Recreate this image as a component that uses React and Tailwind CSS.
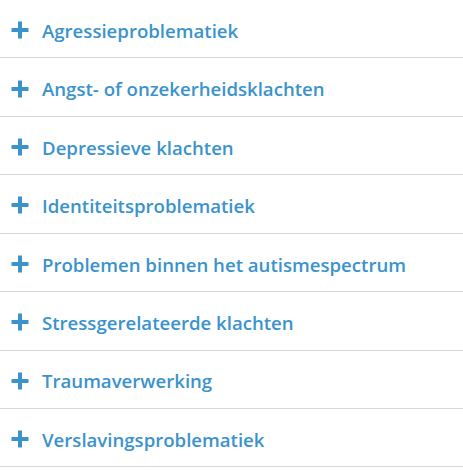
import React from "react";

const items = [
  "Agressieproblematiek",
  "Angst- of onzekerheidsklachten",
  "Depressieve klachten",
  "Identiteitsproblematiek",
  "Problemen binnen het autismespectrum",
  "Stressgerelateerde klachten",
  "Traumaverwerking",
  "Verslavingsproblematiek",
];

function Plus() {
  return (
    <svg width="18" height="18" viewBox="0 0 18 18" className="shrink-0">
      <rect x="7" y="0.5" width="4" height="17" fill="#3a93cc" />
      <rect x="0.5" y="7" width="17" height="4" fill="#3a93cc" />
    </svg>
  );
}

export default function App() {
  return (
    <div className="w-[463px] bg-white" style={{ fontFamily: '"Open Sans", "Noto Sans", sans-serif' }}>
      {items.map((t) => (
        <div
          key={t}
          className="h-[58.43px] border-b border-[#d6d6d6] flex items-center pl-[11px] pt-[3px] gap-[13px]"
        >
          <Plus />
          <span className="text-[18.6px] font-semibold text-[#3a93cc] leading-none pt-[2px]">{t}</span>
        </div>
      ))}
    </div>
  );
}
